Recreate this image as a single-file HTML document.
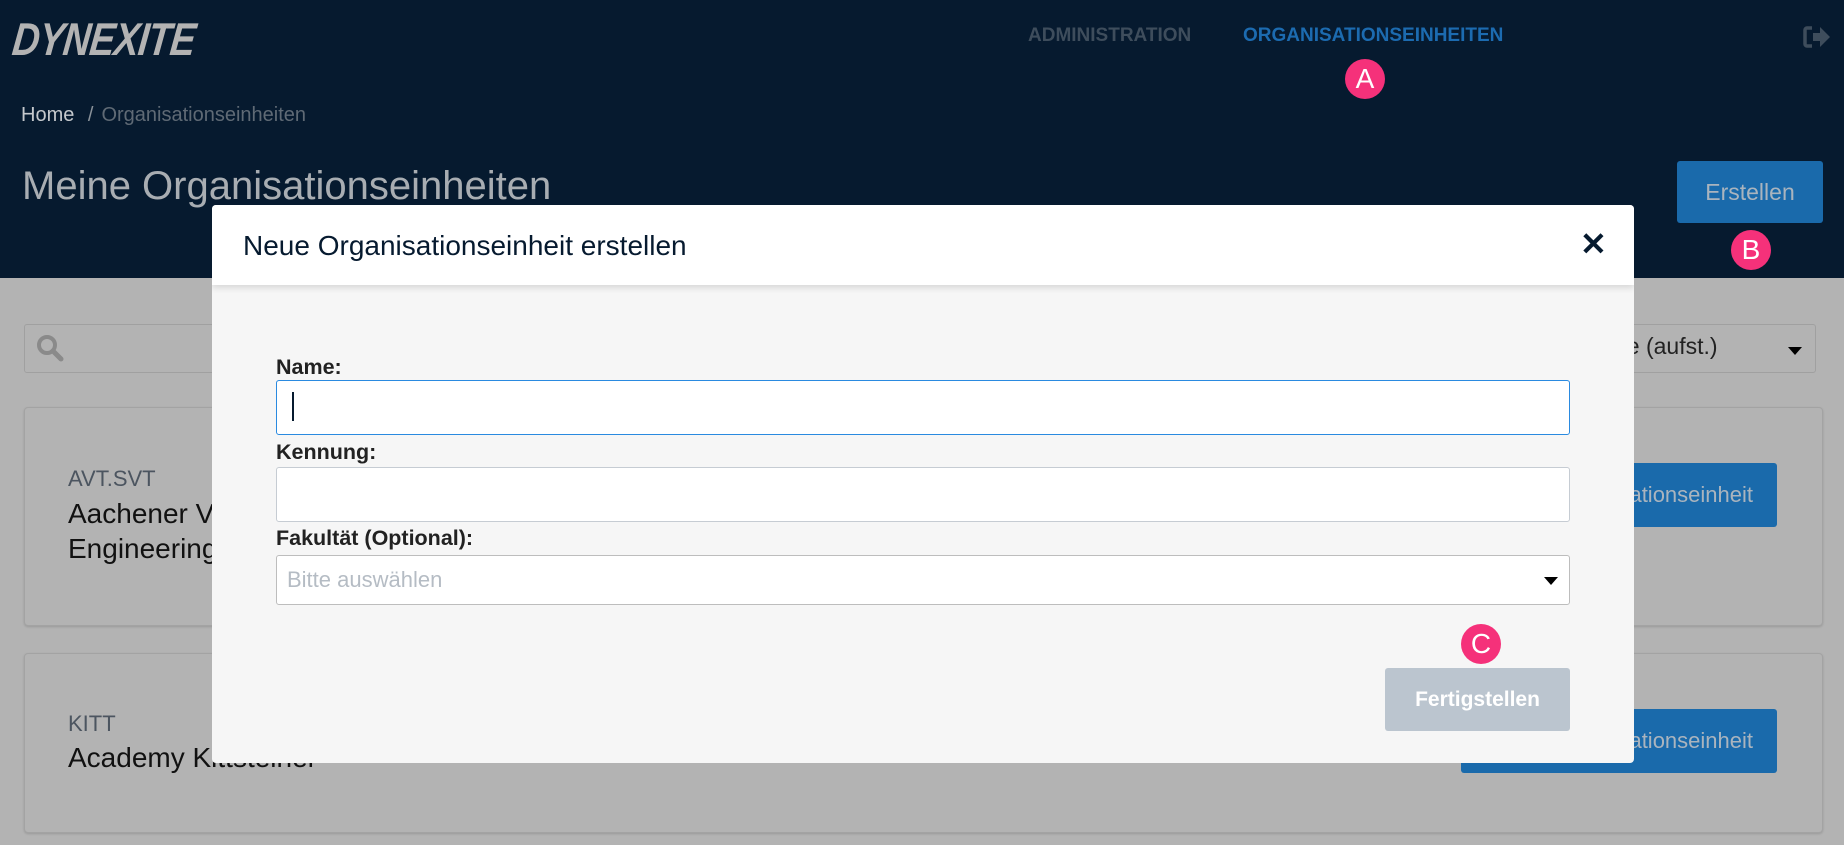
<!DOCTYPE html>
<html><head><meta charset="utf-8"><style>
*{box-sizing:border-box;margin:0;padding:0}
body{width:1844px;height:845px;overflow:hidden;background:#b3b3b3;font-family:"Liberation Sans",sans-serif;position:relative}
.a{position:absolute}
.hdr{left:0;top:0;width:1844px;height:278px;background:#061a2f}
.badge{width:40px;height:40px;border-radius:50%;background:#f5317a;color:#fff;font-size:28px;text-align:center;line-height:40px}
.card{background:#b3b3b3;border:1px solid #a3a3a3;border-radius:4px;box-shadow:0 1px 2px rgba(0,0,0,.15)}
.bb{background:#1a6aab;color:#aab4be;font-size:22px;border-radius:3px;line-height:64px;text-align:right;padding-right:24px;overflow:hidden;white-space:nowrap}
.lbl{font-weight:bold;font-size:21.5px;color:#222}
.inp{background:#fff;border:1px solid #c6ccd3;border-radius:3px;height:55px}
</style></head><body>
<div class="a hdr"></div>
<div class="a" style="left:16px;top:12px;font-size:46px;font-weight:bold;font-style:italic;color:#b3b3b3;letter-spacing:-1px;transform:scaleX(0.82) skewX(-8deg);transform-origin:0 0">DYNEXITE</div>
<div class="a" style="left:1028px;top:25px;font-size:19px;font-weight:bold;color:#3e4d5c">ADMINISTRATION</div>
<div class="a" style="left:1243px;top:25px;font-size:19px;font-weight:bold;color:#1c6bb0">ORGANISATIONSEINHEITEN</div>
<div class="a badge" style="left:1345px;top:59px">A</div>
<svg class="a" style="left:1803px;top:25px" width="28" height="24" viewBox="0 0 28 24"><path d="M9 3H4a2 2 0 0 0-2 2v14a2 2 0 0 0 2 2h5" stroke="#3e4d5c" stroke-width="3.5" fill="none"/><path d="M10 8h7V2l10 10-10 10v-6h-7z" fill="#3e4d5c"/></svg>
<div class="a" style="left:21px;top:104px;font-size:20px;color:#c4c8cc">Home <span style="color:#8a929a;margin:0 8px">/</span><span style="color:#5f6a75">Organisationseinheiten</span></div>
<div class="a" style="left:22px;top:164px;font-size:40px;color:#a8adb2">Meine Organisationseinheiten</div>
<div class="a" style="left:1677px;top:161px;width:146px;height:62px;background:#1a6aab;border-radius:3px;color:#aab4be;font-size:23px;line-height:62px;text-align:center">Erstellen</div>
<div class="a badge" style="left:1731px;top:230px">B</div>

<div class="a" style="left:24px;top:324px;width:1792px;height:49px;border:1px solid #a0a0a0;border-radius:3px;background:#b3b3b3"></div>
<svg class="a" style="left:35px;top:333px" width="30" height="30" viewBox="0 0 30 30"><circle cx="12" cy="12" r="8" stroke="#8a8a8a" stroke-width="4" fill="none"/><path d="M18 18l8 8" stroke="#8a8a8a" stroke-width="5" stroke-linecap="round"/></svg>
<div class="a" style="left:1614px;top:333px;font-size:23px;color:#222">ne (aufst.)</div>
<div class="a" style="left:1788px;top:347px;width:0;height:0;border-left:7px solid transparent;border-right:7px solid transparent;border-top:8px solid #000"></div>

<div class="a card" style="left:24px;top:407px;width:1799px;height:219px"></div>
<div class="a" style="left:68px;top:466px;font-size:22px;color:#4c5560">AVT.SVT</div>
<div class="a" style="left:68px;top:496px;font-size:28px;color:#111;line-height:35px">Aachener Verfahrenstechnik<br>Engineering</div>
<div class="a bb" style="left:1461px;top:463px;width:316px;height:64px">Zur Organisationseinheit</div>

<div class="a card" style="left:24px;top:653px;width:1799px;height:180px"></div>
<div class="a" style="left:68px;top:711px;font-size:22px;color:#4c5560">KITT</div>
<div class="a" style="left:68px;top:742px;font-size:28px;color:#111">Academy Kittsteiner</div>
<div class="a bb" style="left:1461px;top:709px;width:316px;height:64px">Zur Organisationseinheit</div>

<div class="a" style="left:212px;top:205px;width:1422px;height:558px;background:#f6f6f6;border-radius:4px;overflow:hidden">
 <div style="height:80px;background:#fff;box-shadow:0 3px 6px rgba(0,0,0,.12);position:relative">
  <div class="a" style="left:31px;top:25px;font-size:28px;color:#061a2f">Neue Organisationseinheit erstellen</div>
  <div class="a" style="left:1368px;top:20px;font-size:32px;font-weight:bold;color:#061a2f">✕</div>
 </div>
</div>
<div class="a lbl" style="left:276px;top:355px">Name:</div>
<div class="a inp" style="left:276px;top:380px;width:1294px;border-color:#2a8ae0"></div>
<div class="a" style="left:292px;top:392px;width:2px;height:29px;background:#061a2f"></div>
<div class="a lbl" style="left:276px;top:440px">Kennung:</div>
<div class="a inp" style="left:276px;top:467px;width:1294px"></div>
<div class="a lbl" style="left:276px;top:526px">Fakultät (Optional):</div>
<div class="a inp" style="left:276px;top:555px;width:1294px;height:50px;border-color:#bdbdbd"></div>
<div class="a" style="left:287px;top:567px;font-size:22px;color:#b5bcc4">Bitte auswählen</div>
<div class="a" style="left:1544px;top:577px;width:0;height:0;border-left:7px solid transparent;border-right:7px solid transparent;border-top:8px solid #000"></div>
<div class="a badge" style="left:1461px;top:624px">C</div>
<div class="a" style="left:1385px;top:668px;width:185px;height:63px;background:#bbc5cf;border-radius:3px;color:#fff;font-weight:bold;font-size:21px;line-height:63px;text-align:center">Fertigstellen</div>
</body></html>
